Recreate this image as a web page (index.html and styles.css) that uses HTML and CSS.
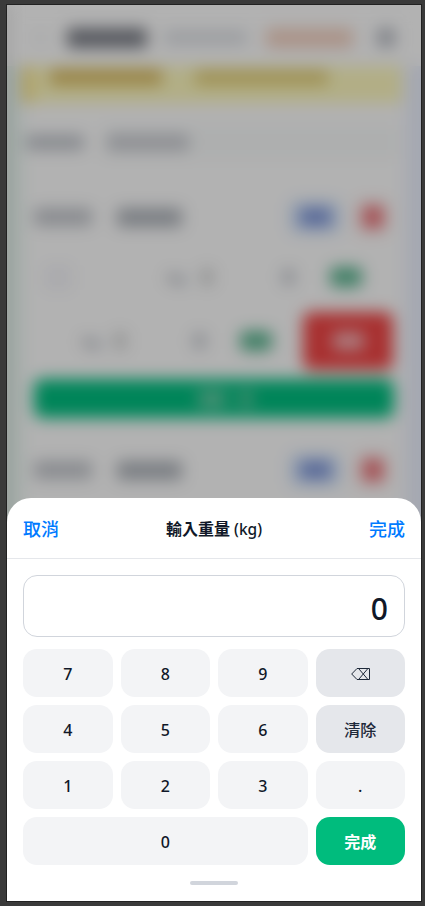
FILE: index.html
```html
<!DOCTYPE html>
<html lang="zh-Hant">
<head>
<meta charset="utf-8">
<title>輸入重量 (kg)</title>
<link rel="stylesheet" href="styles.css">
</head>
<body>
<div class="phone">
  <div class="page">
    <header class="topbar">
      <i class="ink back"></i><i class="ink title"></i><i class="ink date"></i><i class="ink chip"></i><i class="ink menu"></i>
    </header>
    <main class="content">
      <div class="notice"><i class="ink n1"></i><i class="ink n2"></i></div>
      <div class="field"><i class="ink label"></i><div class="input"><i class="ink value"></i></div></div>
      <section class="card">
        <div class="exercise"><i class="ink e1"></i><i class="ink e2"></i><span class="edit"><i class="ink"></i></span><span class="delete"><i class="ink"></i></span></div>
        <div class="set first"><i class="ink round"></i><span class="unit">kg</span><i class="ink count"></i><i class="ink times"></i><span class="done"></span></div>
        <div class="set second"><span class="unit">kg</span><i class="ink count"></i><i class="ink times"></i><span class="done"></span><span class="remove"><i class="ink"></i></span></div>
        <div class="add"><i class="ink a1"></i><i class="ink a2"></i></div>
      </section>
      <section class="card">
        <div class="exercise"><i class="ink e1"></i><i class="ink e2"></i><span class="edit"><i class="ink"></i></span><span class="delete"><i class="ink"></i></span></div>
      </section>
    </main>
  </div>
  <div class="overlay"></div>
  <section class="sheet">
    <header class="sheet-head">
      <button class="link">取消</button><h1>輸入重量 <span>(kg)</span></h1><button class="link">完成</button>
    </header>
    <div class="sheet-body">
      <output class="display">0</output>
      <div class="keys">
        <button>7</button><button>8</button><button>9</button>
        <button class="alt" aria-label="⌫"><svg width="19" height="12" viewBox="0 0 19 12" fill="none" stroke="currentColor"><path d="M6 .5H18.5V11.5H6L.7 6ZM8 1L16.5 11M16.5 1L8 11"/></svg></button>
        <button>4</button><button>5</button><button>6</button><button class="alt text">清除</button>
        <button>1</button><button>2</button><button>3</button><button>.</button>
        <button class="wide">0</button><button class="ok">完成</button>
      </div>
      <div class="handle"></div>
    </div>
  </section>
</div>
</body>
</html>
```
FILE: styles.css
```css
* { box-sizing: border-box; }
body {
  margin: 0;
  height: 906px;
  padding: 4px 3px 4px 6px;
  overflow: hidden;
  background: #3a3a3a;
  font-family: "Noto Sans", "Noto Sans CJK TC", sans-serif;
  color: #101828;
}
.phone {
  position: relative;
  height: 898px;
  border: 1px solid #222;
  overflow: hidden;
  background: #fff;
}
.page {
  height: 530px;
  overflow: hidden;
  background: linear-gradient(90deg, #ebf8f2, #edf1ff);
}
.ink { display: block; flex: none; border-radius: 3px; }

/* Top bar */
.topbar { display: flex; align-items: center; height: 61px; padding: 4px 26px 0 27px; background: #fff; }
.back { width: 14px; height: 14px; background: #f3f4f5; }
.title { width: 80px; height: 20px; margin-left: 19px; background: #7d8089; }
.date { width: 83px; height: 15px; margin-left: 17px; background: #dfe2e7; }
.chip { width: 87px; height: 20px; margin-left: 19px; background: #f4d3c3; }
.menu { width: 18px; height: 19px; margin-left: auto; background: #b8bcc4; }

/* Dimmed page content */
.content { margin: 0 16px; height: 500px; background: #fff; }
.notice { display: flex; height: 37px; padding: 0 0 0 22px; border-left: 8px solid #fbdb6c; background: #fffac0; width: 379px; }
.n1 { width: 112px; height: 16px; margin: 3px 0 0 -3px; background: #dbbd64; }
.n2 { width: 133px; height: 15px; margin: 4px 0 0 33px; background: #e3cf78; }
.field { display: flex; align-items: center; height: 34px; margin: 22px 3px 0; }
.label { width: 58px; height: 15px; background: #c0c4cb; }
.input { display: flex; align-items: center; width: 294px; height: 34px; margin-left: 18px; padding-left: 5px; background: #f9fbfb; }
.value { width: 82px; height: 17px; background: #cbcdd3; }
.card { margin: 23px 0 0; padding: 18px 11px 0; }
.exercise { display: flex; align-items: center; height: 34px; }
.e1 { width: 58px; height: 18px; background: #c4c7cd; }
.e2 { width: 65px; height: 19px; margin-left: 25px; background: #b0b5bc; }
.edit, .delete { display: flex; align-items: center; justify-content: center; height: 34px; border-radius: 8px; }
.edit { width: 52px; margin-left: 107px; background: #d8e7fd; }
.edit .ink { width: 31px; height: 18px; background: #7f97da; }
.delete { width: 33px; margin-left: 15px; background: #fcdede; }
.delete .ink { width: 18px; height: 20px; background: #e9686e; }
.set { display: flex; align-items: center; font-size: 15px; font-weight: 600; color: #8f96a3; }
.unit { width: 24px; line-height: 20px; }
.count { width: 12px; height: 18px; background: #d3d4d4; }
.times { width: 13px; height: 16px; background: #c9ccd3; }
.done { width: 32px; height: 20px; background: #5db792; border-radius: 5px; }
.first { height: 64px; margin-top: 11px; }
.round { width: 28px; height: 25px; margin-left: 10px; background: #f4f4f9; }
.first .unit { margin-left: 95px; }
.first .count { margin-left: 10px; }
.first .times { margin-left: 69px; }
.first .done { margin-left: 35px; }
.second { height: 64px; }
.second .unit { margin-left: 48px; }
.second .count { margin-left: 8px; }
.second .times { margin-left: 67px; }
.second .done { margin-left: 34px; }
.remove { display: flex; align-items: center; justify-content: center; width: 90px; height: 58px; margin-left: 31px; border-radius: 8px; background: #f14545; }
.remove .ink { width: 31px; height: 18px; background: #f6b4b8; }
.add { display: flex; align-items: center; gap: 13px; height: 39px; margin-top: 6px; padding-left: 164px; border-radius: 8px; background: #00bf80; }
.a1 { width: 28px; height: 16px; background: #70cfaa; }
.a2 { width: 14px; height: 16px; background: #63c9a2; }
.card + .card { margin-top: 17px; }

.overlay { position: absolute; inset: 0; background: rgb(0 0 0 / 30%); backdrop-filter: blur(8px); }

/* Keypad sheet */
.sheet {
  position: absolute;
  inset: auto 0 0;
  height: 403px;
  border-radius: 24px 24px 0 0;
  background: #fff;
}
.sheet-head { display: flex; align-items: center; justify-content: space-between; height: 61px; padding: 2px 16px 0; border-bottom: 1px solid #e5e7eb; }
.sheet-head h1 { margin: 0; font-size: 16px; font-weight: 600; line-height: 24px; }
.sheet-head h1 span { font-size: 15.5px; font-weight: 500; }
button { padding: 0; border: 0; font: inherit; color: inherit; }
.link { background: none; font-size: 18px; line-height: 28px; font-weight: 500; color: #007aff; }
.sheet-body { padding: 16px 16px 0; }
.display {
  display: flex;
  align-items: center;
  justify-content: flex-end;
  height: 62px;
  padding: 4px 16px 0;
  border: 1px solid #d1d5dc;
  border-radius: 14px;
  font-size: 30px;
  font-weight: 500;
}
.keys { display: grid; grid-template-columns: repeat(4, 1fr); grid-auto-rows: 48px; gap: 8px; margin-top: 12px; }
.keys button { display: flex; align-items: center; justify-content: center; padding-top: 2px; border-radius: 14px; background: #f3f4f6; font-size: 16px; font-weight: 500; }
.keys .alt { background: #e5e7eb; color: #1e2939; font-weight: 500; }
.keys .wide { grid-column: span 3; }
.keys .ok { background: #00bc7d; color: #fff; font-weight: 700; }
.keys .text, .keys .ok { padding-top: 0; }
.handle { width: 48px; height: 4px; margin: 16px auto 0; border-radius: 2px; background: #d1d5dc; }
```
